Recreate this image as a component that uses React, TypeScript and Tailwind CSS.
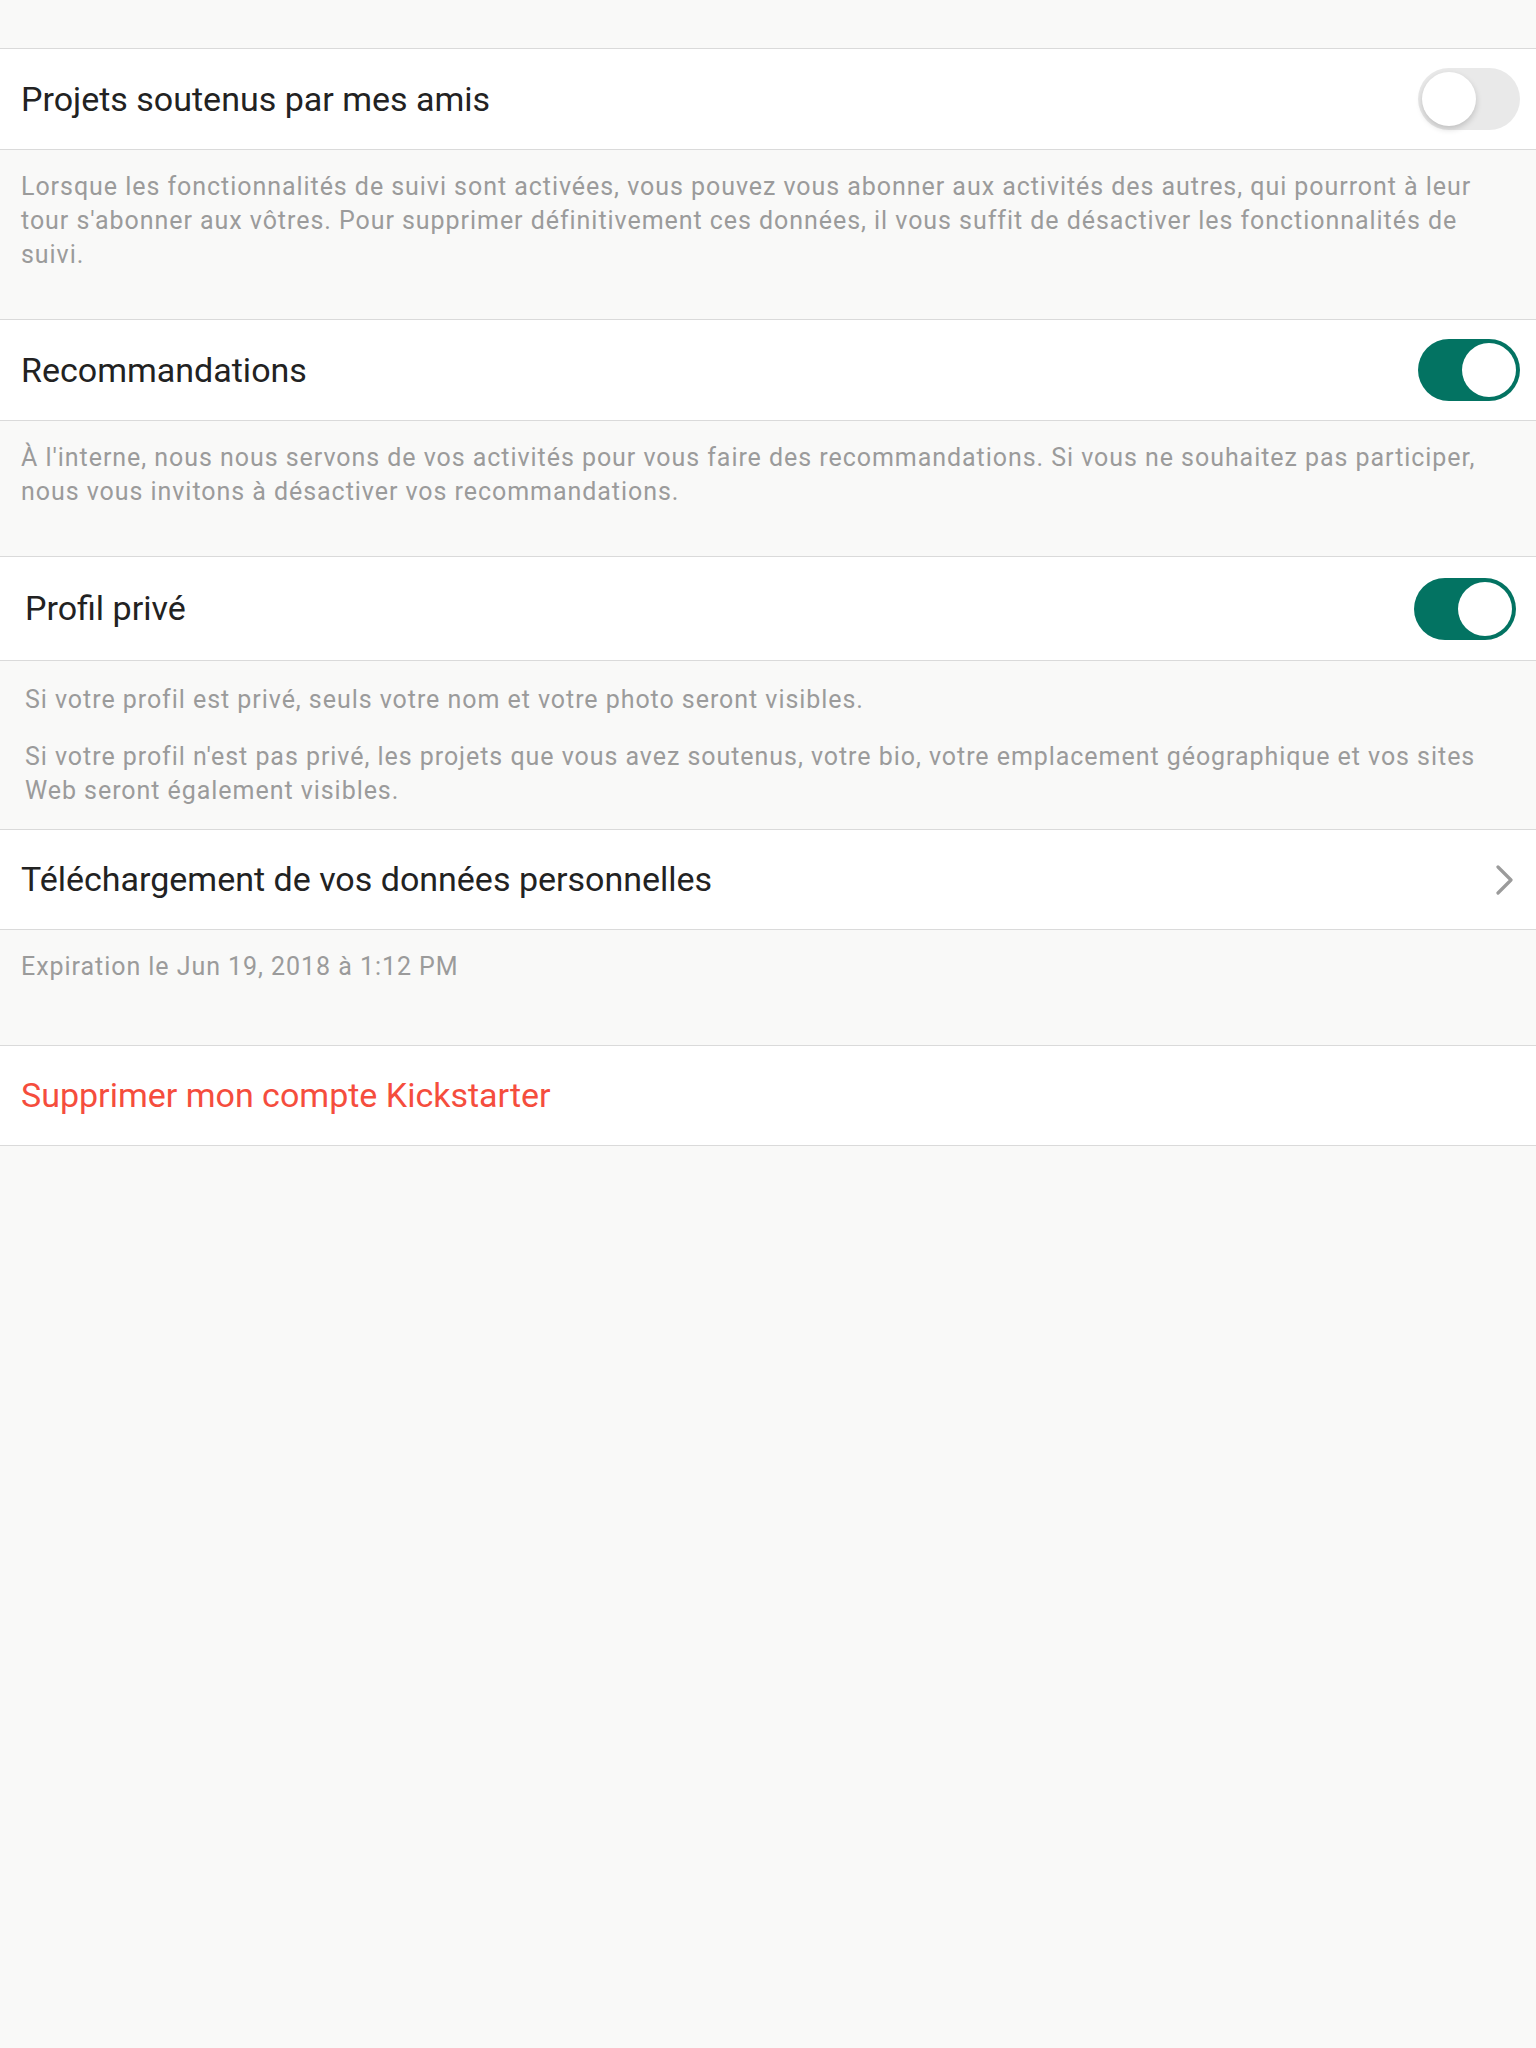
import React from 'react';

const font = { fontFamily: 'Roboto, "Noto Sans", sans-serif' };

const Toggle = ({ on }: { on: boolean }) => {
  if (on) {
    return (
      <div className="flex h-[62px] w-[102px] shrink-0 items-center justify-end rounded-full bg-[#037362] p-[4px]">
        <div className="h-[54px] w-[54px] rounded-full bg-white" />
      </div>
    );
  }
  return (
    <div className="flex h-[62px] w-[102px] shrink-0 items-center justify-start rounded-full bg-[#e9e9e9] p-[4px]">
      <div className="h-[54px] w-[54px] rounded-full bg-white shadow-[0_3px_6px_rgba(0,0,0,0.18)]" />
    </div>
  );
};

const Chevron = () => (
  <svg width="20" height="30" viewBox="0 0 20 30" fill="none" className="shrink-0">
    <path d="M3 2 L16 15 L3 28" stroke="#9b9b9b" strokeWidth="3.2" strokeLinecap="round" strokeLinejoin="round" />
  </svg>
);

const note = 'text-[25px] leading-[34px] tracking-[0.95px] text-[#9b9b9b]';

export default function App() {
  return (
    <div className="min-h-[2048px] w-full bg-[#f9f9f8]" style={font}>
      <div className="h-[48px]" />

      <div className="flex h-[102px] items-center justify-between border-y border-[#dadada] bg-white pl-[21px] pr-[16px]">
        <span className="text-[34px] text-[#222222]">Projets soutenus par mes amis</span>
        <Toggle on={false} />
      </div>
      <div className={`h-[169px] px-[21px] pt-[20px] ${note}`}>
        Lorsque les fonctionnalités de suivi sont activées, vous pouvez vous abonner aux activités des autres, qui pourront à leur tour s'abonner aux vôtres. Pour supprimer définitivement ces données, il vous suffit de désactiver les fonctionnalités de suivi.
      </div>

      <div className="flex h-[102px] items-center justify-between border-y border-[#dadada] bg-white pl-[21px] pr-[16px]">
        <span className="text-[34px] text-[#222222]">Recommandations</span>
        <Toggle on={true} />
      </div>
      <div className={`h-[135px] px-[21px] pt-[20px] ${note}`}>
        À l'interne, nous nous servons de vos activités pour vous faire des recommandations. Si vous ne souhaitez pas participer, nous vous invitons à désactiver vos recommandations.
      </div>

      <div className="flex h-[105px] items-center justify-between border-y border-[#dadada] bg-white pl-[25px] pr-[20px]">
        <span className="text-[34px] text-[#222222]">Profil privé</span>
        <Toggle on={true} />
      </div>
      <div className={`flex h-[168px] flex-col gap-[23px] px-[25px] pt-[22px] ${note}`}>
        <p>Si votre profil est privé, seuls votre nom et votre photo seront visibles.</p>
        <p>
          Si votre profil n'est pas privé, les projets que vous avez soutenus, votre bio, votre emplacement géographique et vos sites Web seront également visibles.
        </p>
      </div>

      <div className="flex h-[101px] items-center justify-between border-y border-[#dadada] bg-white pl-[21px] pr-[21px]">
        <span className="text-[34px] text-[#222222]">Téléchargement de vos données personnelles</span>
        <Chevron />
      </div>
      <div className={`h-[115px] px-[21px] pt-[20px] ${note}`}>
        Expiration le Jun 19, 2018 à 1:12 PM
      </div>

      <div className="flex h-[101px] items-center border-y border-[#dadada] bg-white pl-[21px]">
        <span className="text-[34px] text-[#f54d3d]">Supprimer mon compte Kickstarter</span>
      </div>
    </div>
  );
}
